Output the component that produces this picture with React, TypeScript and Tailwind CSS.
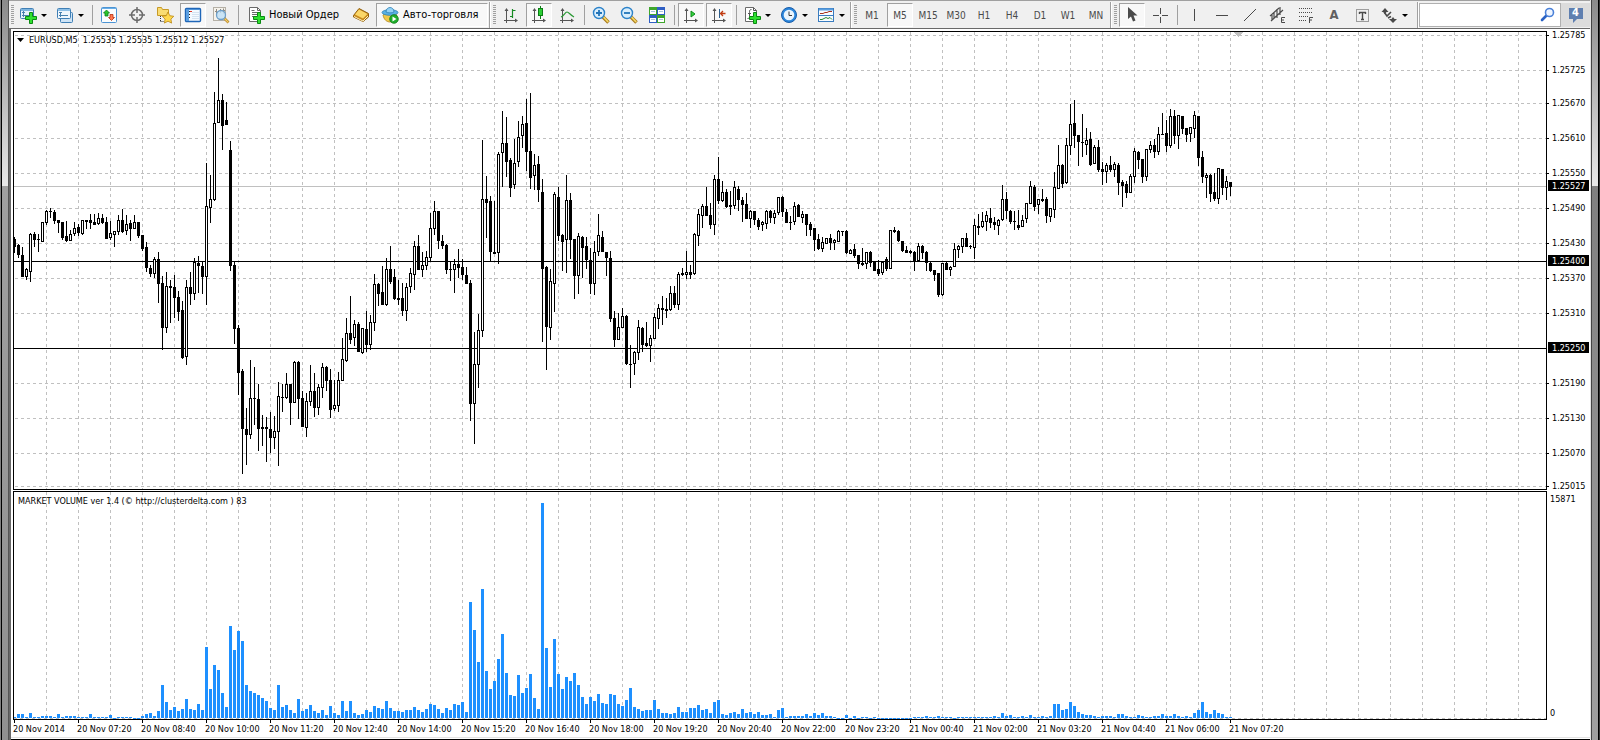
import type { ReactNode } from "react";
import clsx from "clsx";

const STEP = 4;
const CHART_TOP = 32;
const VOLUME_BASE = 226;

// high, body top, body bottom, low (screen y); a trailing "u" marks a hollow candle
const CANDLES = `
237 239 247 253,244 245 255 258,247 255 277 277,268 269 277 280 u,233 234 272 282 u,232 234 240 247,234 239 240 252,222 222 242 242 u,210 211 223 225 u,208 211 212 218,
210 212 221 224,220 220 223 233,222 222 238 240,221 236 241 242,230 234 241 241 u,222 228 234 236 u,224 227 233 236,220 220 234 235 u,220 220 222 229,214 220 223 229,
214 222 225 225,213 218 224 225 u,214 218 223 224,217 222 239 239,221 233 238 240 u,231 231 235 247 u,215 220 232 235 u,209 220 232 233,215 224 231 235 u,220 223 229 241,
215 222 229 229 u,222 222 236 238,235 235 249 251,242 247 268 272,265 268 274 277,257 259 274 278 u,252 259 284 303,276 283 328 350,272 286 328 333 u,280 286 288 323,
275 287 298 318,291 297 312 321,301 310 358 359,280 287 357 365 u,272 287 294 305,258 262 294 300 u,256 263 266 293,262 266 277 294,163 206 277 305 u,175 199 208 223 u,
92 123 200 201 u,58 100 123 123 u,94 100 126 150,102 120 125 125,141 150 266 271,262 265 329 344,325 328 373 395,369 371 429 474,408 429 435 465,360 398 435 439 u,
367 398 399 425,384 399 429 451,415 427 429 446,417 427 429 462,412 429 438 453,416 431 438 449 u,382 396 432 466 u,384 397 398 412,373 384 398 399 u,384 384 403 425,
361 362 403 403 u,361 362 399 419,391 398 427 427,393 401 428 437 u,365 391 402 406 u,373 391 408 417,384 387 408 415 u,363 367 388 398 u,366 367 381 391,369 380 410 418,
380 405 409 411 u,372 380 406 412 u,338 359 381 381 u,318 333 361 362 u,296 333 340 344,320 324 338 346 u,322 324 352 352,328 328 353 354 u,311 329 345 352,315 322 345 350 u,
274 284 323 331 u,283 284 294 306,266 292 305 305,258 269 305 306 u,246 269 282 284,269 277 299 300,280 298 300 305,283 298 311 316,283 287 311 321 u,268 273 287 293 u,
241 246 275 290 u,235 246 270 270,252 265 270 277 u,251 257 266 270 u,213 228 258 261 u,201 211 229 235 u,211 211 241 249,235 241 246 249,244 245 270 274,262 269 270 281,
259 264 270 293 u,249 264 268 278,259 267 275 280,267 275 284 284,280 283 404 421,332 364 404 444 u,314 330 365 388 u,140 199 331 337 u,176 199 203 238,196 201 252 261,
201 252 254 254,152 154 253 264 u,111 143 153 187 u,117 143 162 177,158 160 188 197,139 163 185 189 u,121 137 162 167 u,116 124 136 148 u,99 123 152 171,93 151 178 189,
154 165 176 190 u,156 164 190 202,179 192 269 342,266 267 327 370,269 281 328 340 u,192 194 284 312 u,187 197 236 241,234 235 242 271,175 200 240 273 u,193 200 240 259,
239 239 276 299,233 236 276 294 u,236 237 248 278,237 246 260 269,248 260 284 294,241 252 284 295 u,214 235 252 256 u,231 237 252 252,252 252 258 276,251 258 319 322,
311 318 340 347,313 327 340 340 u,308 316 328 328 u,315 316 364 365,345 364 365 388,351 352 364 375 u,320 327 353 360 u,327 328 345 352,322 343 346 347,335 338 346 362 u,
313 317 339 339 u,304 308 319 329 u,296 308 310 325,298 309 311 318,286 293 310 311 u,286 293 305 308,272 274 305 310 u,268 273 275 276,251 272 275 279 u,265 272 275 279,
233 234 274 275 u,209 214 236 246 u,204 206 216 228 u,187 206 216 216,203 215 225 229,175 179 225 235 u,157 179 201 204,181 192 201 202 u,189 192 207 208,191 205 207 215,
181 187 206 209 u,186 189 200 211,197 200 205 222,193 204 219 219,210 211 219 228 u,211 211 220 225,218 220 227 230,221 222 225 231 u,210 211 224 229 u,210 211 218 223,
210 213 218 224 u,197 197 213 215 u,196 197 212 217,209 212 223 223,216 222 223 230,202 206 222 225 u,204 205 217 217,211 214 218 223 u,214 214 225 236,222 224 230 236,
228 228 240 251,234 239 249 250,237 242 249 252 u,238 238 244 244 u,234 238 243 250,239 240 243 250 u,230 231 242 242 u,231 231 232 236,230 231 253 254,249 250 254 254 u,
244 249 256 258,255 255 264 269,248 263 265 266,252 252 264 269 u,251 252 263 267,261 261 271 271,260 269 274 276,262 262 273 275 u,257 259 269 271,230 230 269 269 u,
227 230 232 233,230 231 241 242,241 241 251 252,246 250 253 253,250 251 253 254,251 252 261 271,243 246 261 262 u,245 246 253 259,251 252 263 271,262 263 271 272,
270 270 275 281,273 273 295 297,263 263 295 296 u,262 263 270 270,266 267 270 276 u,243 249 267 267 u,245 246 250 258 u,238 238 247 253 u,233 238 247 247,245 246 247 249,
219 225 248 259 u,214 226 228 235,212 221 227 228 u,211 215 222 231 u,208 218 223 228,217 222 225 230,219 220 226 235 u,185 199 220 221 u,192 199 211 219,210 211 222 224,
211 221 222 230,210 225 228 230,215 220 227 227 u,203 203 219 223 u,181 186 204 204 u,185 187 207 211,199 199 205 214 u,189 199 201 202,197 199 216 223,208 208 217 222 u,
172 187 210 218 u,145 165 189 189 u,164 165 184 188,138 145 183 184 u,104 124 146 155 u,100 123 136 148,135 135 142 166,114 142 143 157,128 140 145 155 u,132 139 165 166,
145 147 164 164 u,140 147 170 172,162 169 172 185,163 165 172 183 u,156 165 170 172,162 164 170 177 u,163 165 183 195,180 182 186 207,181 184 193 198,174 176 193 193 u,
148 151 177 183 u,151 152 160 169,159 159 177 183,149 149 177 181 u,141 145 150 153 u,139 145 152 158,127 134 152 155 u,113 134 135 135,120 133 146 152,109 116 146 148 u,
110 116 136 144,115 115 136 149 u,116 116 129 134,128 128 135 142,127 127 134 142 u,111 115 129 138 u,116 116 158 166,151 157 177 183,173 175 178 198 u,174 175 194 202,
173 192 199 201,168 168 199 204 u,169 169 188 195,176 181 188 200 u,182 182 187 196`
  .trim()
  .split(",")
  .map((row) => {
    const [high, top, bottom, low, up] = row.trim().split(" ");
    return { high: +high, top: +top, bottom: +bottom, low: +low, hollow: up === "u" };
  });

const VOLUMES = [
  1, 4, 4, 1, 5, 1, 1, 2, 2, 2, 1, 4, 1, 2, 2, 2, 1, 1, 1, 4, 1, 1, 1, 1, 3, 0, 1, 1, 1, 1,
  0, 0, 2, 4, 5, 2, 7, 33, 16, 8, 11, 7, 9, 19, 9, 8, 14, 8, 71, 29, 53, 48, 25, 11, 92, 68, 87, 77, 33, 27,
  25, 23, 20, 17, 10, 8, 33, 11, 13, 8, 5, 19, 7, 9, 13, 7, 5, 8, 3, 12, 5, 3, 17, 7, 17, 5, 3, 4, 8, 6,
  12, 10, 9, 17, 10, 7, 7, 6, 8, 8, 11, 8, 6, 9, 14, 13, 9, 5, 10, 8, 14, 13, 16, 6, 116, 88, 56, 129, 47, 29,
  37, 59, 84, 45, 23, 22, 43, 25, 30, 44, 20, 9, 215, 70, 31, 79, 44, 29, 41, 37, 45, 33, 21, 14, 21, 17, 24, 15, 14, 24,
  23, 14, 12, 18, 30, 11, 9, 7, 8, 8, 18, 9, 5, 5, 4, 5, 11, 6, 6, 10, 10, 13, 8, 9, 5, 16, 18, 4, 3, 5,
  6, 4, 9, 5, 6, 4, 6, 3, 3, 4, 1, 8, 10, 1, 2, 2, 2, 2, 4, 2, 5, 3, 5, 2, 2, 1, 0, 0, 3, 0,
  2, 0, 1, 1, 0, 1, 0, 0, 0, 0, 0, 0, 0, 0, 0, 1, 1, 1, 2, 1, 1, 2, 1, 1, 1, 0, 1, 1, 1, 1,
  1, 1, 1, 1, 1, 2, 1, 5, 2, 3, 1, 1, 2, 1, 3, 1, 1, 2, 1, 2, 14, 14, 8, 9, 16, 12, 6, 4, 3, 3,
  2, 1, 2, 2, 2, 1, 4, 4, 2, 1, 1, 3, 2, 1, 1, 2, 2, 4, 2, 2, 4, 2, 1, 2, 1, 5, 8, 16, 6, 4,
  8, 5, 4, 1, 1,
];
// the bar at 06:40 is the last tall one, keep the tail aligned with the last candle
const VOLUME_BARS = VOLUMES.slice(0, CANDLES.length);

const PRICES: [string, number][] = [
  ["1.25785", 35], ["1.25725", 70], ["1.25670", 103], ["1.25610", 138], ["1.25550", 173],
  ["1.25490", 208], ["1.25430", 243], ["1.25370", 278], ["1.25310", 313], ["1.25190", 383],
  ["1.25130", 418], ["1.25070", 453], ["1.25015", 486],
];

const LEVELS: [string, number, string][] = [
  ["1.25527", 186, "#c0c0c0"],
  ["1.25400", 261, "#000"],
  ["1.25250", 348, "#000"],
];

const TIMES = [
  "20 Nov 2014", "20 Nov 07:20", "20 Nov 08:40", "20 Nov 10:00", "20 Nov 11:20", "20 Nov 12:40", "20 Nov 14:00",
  "20 Nov 15:20", "20 Nov 16:40", "20 Nov 18:00", "20 Nov 19:20", "20 Nov 20:40", "20 Nov 22:00", "20 Nov 23:20",
  "21 Nov 00:40", "21 Nov 02:00", "21 Nov 03:20", "21 Nov 04:40", "21 Nov 06:00", "21 Nov 07:20",
];

const TIMEFRAMES = ["M1", "M5", "M15", "M30", "H1", "H4", "D1", "W1", "MN"];

function Icon({ children, size = 18 }: { children: ReactNode; size?: number }) {
  return (
    <svg width={size} height={size} viewBox={`0 0 ${size} ${size}`} fill="none" className="shrink-0" aria-hidden="true">
      {children}
    </svg>
  );
}

function Plus() {
  return (
    <path transform="translate(6 6)" d="M4.500.5h3v4h4v3h-4v4h-3v-4h-4v-3h4z" fill="#2fe02f" stroke="#0a8a12" />
  );
}

function Axes() {
  return (
    <>
      <path d="M4.500 3v14M2 14.500h13" stroke="#555" />
      <path d="M4.500 2l2 3h-4zM16 14.500l-3-2v4z" fill="#555" />
    </>
  );
}

const icons = {
  newChart: (
    <Icon>
      <rect x="1.500" y="2.500" width="13" height="10" rx="1" fill="#e6f2fc" stroke="#3f7fb5" />
      <path d="M2 4h12" stroke="#7db4de" strokeWidth="2" />
      <path d="M4.500 5v6M3 9.500h8M3 6.500h3" stroke="#4680ae" />
      <Plus />
    </Icon>
  ),
  profiles: (
    <Icon>
      <rect x="4.500" y="6.500" width="12" height="10" rx="1" fill="#cfe4f6" stroke="#3f7fb5" />
      <rect x="1.500" y="2.500" width="13" height="10" rx="1" fill="#eef6fd" stroke="#3f7fb5" />
      <path d="M2 4h12" stroke="#8dbfe6" strokeWidth="2" />
      <path d="M4.500 6v5M3 9.500h9M3 6.500h3" stroke="#4680ae" />
    </Icon>
  ),
  marketWatch: (
    <Icon>
      <rect x="1.500" y="1.500" width="15" height="15" rx="1" fill="#fafdff" stroke="#4c94d4" />
      <path d="M2 2.500h14" stroke="#69aee6" />
      <path d="M6.500 4l3 3H8v3H5V7H3.500z" fill="#29c52c" stroke="#0c7d16" strokeWidth=".8" />
      <path d="M11.500 14.500l-3-3H10v-3h3v3h1.500z" fill="#ff7b52" stroke="#b52d10" strokeWidth=".8" />
    </Icon>
  ),
  target: (
    <Icon>
      <circle cx="9" cy="9" r="5.500" stroke="#6b6b6b" strokeWidth="1.500" />
      <path d="M9 1v6M9 11v6M1 9h6M11 9h6" stroke="#6b6b6b" strokeWidth="1.500" />
    </Icon>
  ),
  favorites: (
    <Icon>
      <path d="M1.500 1.500h4l1 2h6v6h-11z" fill="#f9dc72" stroke="#c79a28" />
      <path d="M4.500 10v6M4.500 15.500h3" stroke="#333" strokeDasharray="1 1" />
      <path d="M12 6l1.800 3.700 4 .6-2.900 2.800.7 4-3.600-1.900-3.600 1.900.7-4L6.200 10.300l4-.6z" fill="#ffd84c" stroke="#b98613" strokeWidth=".8" />
    </Icon>
  ),
  navigator: (
    <Icon>
      <rect x="1.500" y="2.500" width="15" height="13" rx="1" fill="#f4faff" stroke="#1f66b8" strokeWidth="1.400" />
      <path d="M2 3.500h14" stroke="#4f93d8" />
      <path d="M2 4h3v11H2z" fill="#5b9fe0" />
      <path d="M5.500 5v9" stroke="#222" strokeDasharray="1 2" />
      <path d="M8 6.500h7M8 8.500h7M8 10.500h7M8 12.500h7" stroke="#d5e3f0" />
      <path d="M6 5.500h2" stroke="#e03a2a" />
    </Icon>
  ),
  tester: (
    <Icon>
      <rect x="1.500" y="1.500" width="12" height="13" fill="#f6f3ec" stroke="#b5b0a6" />
      <path d="M4.500 3v6M3 5.500h2M8.500 3v4M11.500 2.500v5M10 4.500h3" stroke="#8f8a80" />
      <path d="M12 12l4.500 4.500" stroke="#b8862a" strokeWidth="2.600" />
      <path d="M12 12l4.300 4.300" stroke="#f2cf6a" strokeWidth="1.200" />
      <circle cx="9" cy="9" r="4.500" fill="#bfe0f8cc" stroke="#6d9fc9" strokeWidth="1.300" />
    </Icon>
  ),
  newOrder: (
    <Icon>
      <path d="M2.500 1.500h8l3 3v11h-11z" fill="#fff" stroke="#6a6a6a" />
      <path d="M10.500 1.500v3h3M5 6.500h6M5 8.500h6M5 10.500h3M4.500 4.500h3" stroke="#6a6a6a" />
      <Plus />
    </Icon>
  ),
  book: (
    <Icon>
      <path d="M1.500 9.500L7 2.500l9.500 5v3.500L11 15.500 1.500 11z" fill="#c88a1c" stroke="#93610c" />
      <path d="M3 8.500L7 3.500l8.500 4.500-4.500 4.500z" fill="#fbd768" />
      <path d="M2 10.500l9 4.500 5-5" stroke="#fff0c0" />
    </Icon>
  ),
  auto: (
    <Icon>
      <path d="M2 9c1-2 13-2 14 0-1 5-4 7-7 7s-6-2-7-7z" fill="#f0c84a" stroke="#b1861c" strokeWidth=".8" />
      <ellipse cx="9" cy="6.500" rx="8" ry="2.800" fill="#58b0e4" stroke="#2c7fb4" strokeWidth=".8" />
      <path d="M5 6c0-6 8-6 8 0-2 1.200-6 1.200-8 0z" fill="#93d2f5" stroke="#2c7fb4" strokeWidth=".8" />
      <circle cx="13" cy="13" r="4.300" fill="#1fae2c" stroke="#0c7d16" strokeWidth=".8" />
      <path d="M11.500 10.500l4 2.500-4 2.500z" fill="#fff" />
    </Icon>
  ),
  bars: (
    <Icon>
      <Axes />
      <path d="M10.500 3v9M8 10.500h2M11 4.500h2.500" stroke="#168a22" strokeWidth="1.200" />
    </Icon>
  ),
  candles: (
    <Icon>
      <Axes />
      <path d="M10.500 0v13" stroke="#0c7d16" />
      <rect x="8.500" y="2.500" width="4" height="7" fill="#2ccf35" stroke="#0c7d16" />
    </Icon>
  ),
  line: (
    <Icon>
      <Axes />
      <path d="M3 11c3-1 4-5 6-5s3 3 7 5" stroke="#2b9a35" strokeWidth="1.200" />
    </Icon>
  ),
  zoomIn: (
    <Icon>
      <path d="M10.500 10.500l6 6" stroke="#a87a1c" strokeWidth="3.600" />
      <path d="M11 10.500l5.200 5.500" stroke="#f5d765" strokeWidth="1.800" />
      <circle cx="7" cy="7" r="5.500" fill="#d9eefc" stroke="#2b82c9" strokeWidth="1.400" />
      <path d="M7 4v6M4 7h6" stroke="#2274b8" strokeWidth="1.800" />
    </Icon>
  ),
  zoomOut: (
    <Icon>
      <path d="M10.500 10.500l6 6" stroke="#a87a1c" strokeWidth="3.600" />
      <path d="M11 10.500l5.200 5.500" stroke="#f5d765" strokeWidth="1.800" />
      <circle cx="7" cy="7" r="5.500" fill="#d9eefc" stroke="#2b82c9" strokeWidth="1.400" />
      <path d="M4 7h6" stroke="#2274b8" strokeWidth="1.800" />
    </Icon>
  ),
  tile: (
    <Icon>
      <path d="M1 1h8v8H1z" fill="#3fa62c" />
      <path d="M9 1h8v8H9z" fill="#2f5fc4" />
      <path d="M1 9h8v8H1z" fill="#2f5fc4" />
      <path d="M9 9h8v8H9z" fill="#3fa62c" />
      <path d="M2 4h6v4H2zM10 4h6v4h-6zM2 12h6v4H2zM10 12h6v4h-6z" fill="#fff" />
      <path d="M3 5.500h4M11 5.500h4M3 13.500h4M11 13.500h4" stroke="#a9c4dd" />
    </Icon>
  ),
  autoScroll: (
    <Icon>
      <Axes />
      <path d="M9 5l4 3-4 3z" fill="#35d23f" stroke="#0c8a18" />
    </Icon>
  ),
  shift: (
    <Icon>
      <Axes />
      <path d="M9.500 3v9" stroke="#2a5f8e" />
      <path d="M15.500 7.500h-5M13 5l-2.500 2.500L13 10" stroke="#c03a10" strokeWidth="1.300" />
    </Icon>
  ),
  indicators: (
    <Icon>
      <path d="M2.500 1.500h8l3 3v11h-11z" fill="#fff" stroke="#6a6a6a" />
      <path d="M10.500 1.500v3h3M8.500 3.500c-2 0-2 1-2 3v4c0 2-1 2-2 2M5 7.500h3" stroke="#555" />
      <Plus />
    </Icon>
  ),
  clock: (
    <Icon>
      <circle cx="9" cy="9" r="7.500" fill="#2b86dc" stroke="#1a5eaa" />
      <circle cx="9" cy="9" r="5.300" fill="#eaf5fe" />
      <path d="M9 5.500V9.500h3" stroke="#3a3a3a" />
    </Icon>
  ),
  template: (
    <Icon>
      <rect x="1.500" y="2.500" width="15" height="13" fill="#f8fcff" stroke="#3a7cbf" />
      <path d="M2 3.500h14" stroke="#5a9fe0" strokeWidth="2" />
      <path d="M2 9.500h14" stroke="#3a7cbf" />
      <path d="M3 7.500h3l2-1h2l2-1h3" stroke="#a63320" />
      <path d="M3 13.500h2l2-1 2-1 2 1 2-1 2 2" stroke="#2b8a35" />
    </Icon>
  ),
  cursor: (
    <Icon>
      <path d="M5 1v12l3-2.500 2 5 2.500-1-2-5h4z" fill="#4a4a4a" />
    </Icon>
  ),
  crosshair: (
    <Icon>
      <path d="M9.500 2v6M9.500 11v6M2 9.500h6M11 9.500h6" stroke="#4a4a4a" />
    </Icon>
  ),
  vline: (
    <Icon>
      <path d="M9.500 3v12" stroke="#4a4a4a" />
    </Icon>
  ),
  hline: (
    <Icon>
      <path d="M3 9.500h12" stroke="#4a4a4a" />
    </Icon>
  ),
  trend: (
    <Icon>
      <path d="M3 15L15 3" stroke="#4a4a4a" />
    </Icon>
  ),
  channel: (
    <Icon>
      <path d="M1 10l9-8M2 15L14 4M5 6v6M8 3v9M11 1v8M3 9v5" stroke="#4a4a4a" strokeWidth="1.200" />
      <path d="M16 11.500h-3.500v5H16M12.500 14H15" stroke="#4a4a4a" />
    </Icon>
  ),
  fibo: (
    <Icon>
      <path d="M2 2.500h14M2 6.500h14M2 10.500h9M2 14.500h8" stroke="#4a4a4a" strokeDasharray="1 1" />
      <path d="M16 11.500h-3.500V17M12.500 14H15" stroke="#4a4a4a" />
    </Icon>
  ),
  label: (
    <Icon>
      <rect x="3.500" y="3.500" width="12" height="12" stroke="#4a4a4a" strokeDasharray="1 1" />
      <path d="M6 6.500h7M9.500 6v8M8 13.500h3M6.500 6v2M12.500 6v2" stroke="#4a4a4a" strokeWidth="1.400" />
    </Icon>
  ),
  arrows: (
    <Icon>
      <path d="M5 2l3.500 4H6.500L5 8 3.500 6H1.500zM13 17l-4-4h2.500L13 11l1.500 2H17z" fill="#4a4a4a" />
      <path d="M4 6l3 4 4-4M8 12l3-1.500" stroke="#4a4a4a" strokeWidth="1.600" />
    </Icon>
  ),
};

function Tool({ label, pressed, children }: { label: string; pressed?: boolean; children: ReactNode }) {
  return (
    <button
      type="button"
      aria-label={label}
      aria-pressed={pressed}
      className={clsx(
        "mx-px flex h-6 w-[26px] shrink-0 items-center justify-center text-[10px] text-[#4a4a4a]",
        pressed && "border border-t-[#a0a0a0] border-r-white border-b-white border-l-[#a0a0a0] bg-[#f8f8f8]"
      )}
    >
      {children}
    </button>
  );
}

function DropTool({ label, children }: { label: string; children: ReactNode }) {
  return (
    <button type="button" aria-label={label} className="flex h-6 w-[37px] shrink-0 items-center gap-1 pl-1">
      {children}
      <svg width="6" height="3" viewBox="0 0 6 3" aria-hidden="true">
        <path d="M0 0h6L3 3z" fill="#000" />
      </svg>
    </button>
  );
}

function Grip() {
  return (
    <div className="flex w-[6px] shrink-0 justify-center">
      <div className="h-5 w-[3px] bg-[repeating-linear-gradient(#a0a0a0_0_1px,#f0f0f0_1px_2px)]" />
    </div>
  );
}

function Separator() {
  return (
    <div className="flex w-[6px] shrink-0 justify-center">
      <div className="h-5 w-px bg-[#a0a0a0]" />
    </div>
  );
}

function BarEnd() {
  return <div className="h-[26px] w-[2px] shrink-0 border-l border-[#a0a0a0] bg-white" />;
}

function Toolbar() {
  return (
    <div
      role="toolbar"
      aria-label="Charts"
      className="flex h-[28px] items-center border-t border-[#a0a0a0] bg-[#f0f0f0] pt-px"
    >
      <Grip />
      <DropTool label="New chart">{icons.newChart}</DropTool>
      <DropTool label="Profiles">{icons.profiles}</DropTool>
      <Separator />
      <Tool label="Market watch">{icons.marketWatch}</Tool>
      <Tool label="Data window">{icons.target}</Tool>
      <Tool label="Favorites">{icons.favorites}</Tool>
      <Tool label="Navigator" pressed>{icons.navigator}</Tool>
      <Tool label="Strategy tester">{icons.tester}</Tool>
      <Separator />
      <button type="button" className="flex h-6 w-[106px] shrink-0 items-center gap-1 pl-[6px] text-[11px] whitespace-nowrap">
        {icons.newOrder}
        Новый Ордер
      </button>
      <Tool label="MetaEditor">{icons.book}</Tool>
      <button
        type="button"
        aria-pressed="true"
        className="mx-px flex h-6 w-[112px] shrink-0 items-center gap-1 border border-t-[#a0a0a0] border-r-white border-b-white border-l-[#a0a0a0] bg-[#f8f8f8] pl-1 text-[11px] whitespace-nowrap"
      >
        {icons.auto}
        Авто-торговля
      </button>
      <BarEnd />
      <Grip />
      <Tool label="Bar chart">{icons.bars}</Tool>
      <Tool label="Candlesticks" pressed>{icons.candles}</Tool>
      <Tool label="Line chart">{icons.line}</Tool>
      <Separator />
      <Tool label="Zoom in">{icons.zoomIn}</Tool>
      <Tool label="Zoom out">{icons.zoomOut}</Tool>
      <Tool label="Tile windows">{icons.tile}</Tool>
      <Separator />
      <Tool label="Auto scroll" pressed>{icons.autoScroll}</Tool>
      <Tool label="Chart shift" pressed>{icons.shift}</Tool>
      <Separator />
      <DropTool label="Indicators">{icons.indicators}</DropTool>
      <DropTool label="Periods">{icons.clock}</DropTool>
      <DropTool label="Templates">{icons.template}</DropTool>
      <BarEnd />
      <Grip />
      {TIMEFRAMES.map((tf) => (
        <Tool key={tf} label={tf} pressed={tf === "M5"}>
          {tf}
        </Tool>
      ))}
      <BarEnd />
      <Grip />
      <Tool label="Cursor" pressed>{icons.cursor}</Tool>
      <Tool label="Crosshair">{icons.crosshair}</Tool>
      <Separator />
      <Tool label="Vertical line">{icons.vline}</Tool>
      <Tool label="Horizontal line">{icons.hline}</Tool>
      <Tool label="Trendline">{icons.trend}</Tool>
      <Tool label="Equidistant channel">{icons.channel}</Tool>
      <Tool label="Fibonacci retracement">{icons.fibo}</Tool>
      <Tool label="Text">
        <span className="text-[13px] font-bold text-[#606060]">A</span>
      </Tool>
      <Tool label="Text label">{icons.label}</Tool>
      <DropTool label="Arrows">{icons.arrows}</DropTool>
      <div className="w-1 shrink-0" />
      <BarEnd />
      <div className="flex h-6 min-w-20 flex-1 items-center border border-[#b0b0b0] bg-white pr-1">
        <input type="text" aria-label="Search" className="h-full w-full min-w-0 bg-transparent px-1 text-[11px] outline-none" />
        <Icon size={16}>
          <path d="M6.500 8.500L2 13" stroke="#2a62c4" strokeWidth="2.600" strokeLinecap="round" />
          <circle cx="9.500" cy="5.500" r="4" fill="#eef5ff" stroke="#4a80d8" strokeWidth="1.600" />
        </Icon>
      </div>
      <button type="button" aria-label="Messages" className="relative flex h-6 w-[29px] shrink-0 items-center justify-center bg-[#dcdcdc]">
        <svg width="16" height="16" viewBox="0 0 16 16" aria-hidden="true">
          <path d="M1 1h14v11H9l-4 4v-4H1z" fill="#5f7fb0" />
        </svg>
        <span className="absolute top-1 text-[11px] leading-3 font-bold text-white">4</span>
      </button>
    </div>
  );
}

function VerticalGrid() {
  return (
    <>
      <defs>
        <pattern id="grid" width="32" height="6" patternUnits="userSpaceOnUse">
          <path d="M0 0h1v3h-1z" fill="#c0c0c0" />
        </pattern>
      </defs>
      <rect x="32" width="100%" height="100%" fill="url(#grid)" />
    </>
  );
}

function PriceChart() {
  return (
    <svg className="block h-[457px] w-full" shapeRendering="crispEdges" role="img" aria-label="EURUSD M5 candlestick chart">
      <VerticalGrid />
      {PRICES.map(([price, y]) => (
        <line key={price} x1="1" x2="100%" y1={y - CHART_TOP + 0.5} y2={y - CHART_TOP + 0.5} stroke="#c0c0c0" strokeDasharray="3 3" />
      ))}
      {LEVELS.map(([price, y, color]) => (
        <rect key={price} y={y - CHART_TOP} width="100%" height="1" fill={color} />
      ))}
      <path d="M1220 0h9l-4.500 5z" fill="#c0c0c0" />
      {CANDLES.map(({ high, top, bottom, low, hollow }, i) => (
        <g key={i} transform={`translate(${i * STEP} ${-CHART_TOP})`}>
          <rect y={high} width="1" height={low - high} />
          <rect x="-1" y={top} width="3" height={bottom - top} />
          {hollow && <rect y={top + 1} width="1" height={Math.max(bottom - top - 2, 0)} fill="#fff" />}
        </g>
      ))}
    </svg>
  );
}

function VolumeChart() {
  return (
    <svg className="block h-[227px] w-full" shapeRendering="crispEdges" role="img" aria-label="Market volume histogram">
      <VerticalGrid />
      <line x1="0" x2="100%" y1={VOLUME_BASE + 0.5} y2={VOLUME_BASE + 0.5} stroke="#c0c0c0" strokeDasharray="3 3" />
      {VOLUME_BARS.map((v, i) => (
        <rect key={i} x={i * STEP - 1} y={VOLUME_BASE - v} width="3" height={Math.max(v, 1)} fill="#1e90ff" />
      ))}
    </svg>
  );
}

function PriceAxis() {
  return (
    <svg className="block h-[459px] w-[43px] shrink-0 overflow-visible text-[9px]" shapeRendering="crispEdges">
      {PRICES.map(([price, y]) => (
        <g key={price}>
          <rect y={y - 31} width="2" height="1" />
          <text x="5" y={y - 28}>{price}</text>
        </g>
      ))}
      {LEVELS.map(([price, y]) => (
        <g key={price}>
          <rect x="1" y={y - 37} width="41" height="11" />
          <text x="5" y={y - 28} fill="#fff">{price}</text>
        </g>
      ))}
    </svg>
  );
}

export default function App() {
  return (
    <div className="flex min-h-screen bg-white font-['DejaVu_Sans_Condensed','DejaVu_Sans',sans-serif] text-[9px] text-black">
      <div className="flex w-[9px] shrink-0 border-r border-l border-r-[#555] border-l-[#808080] bg-black pl-px">
        <div className="flex-1 bg-[linear-gradient(#8a8a8a,#e8e8e8_186px,#a0a0a0_186px,#909090)]" />
      </div>

      <div className="flex min-w-0 flex-1 flex-col">
        <Toolbar />
        <main className="flex flex-1 flex-col border-t border-l-2 border-[#696969] pt-px">
          <div className="flex flex-1 flex-col pt-px pl-[2px]">
            <div className="flex">
              <section className="relative min-w-0 flex-1 border border-black">
                <PriceChart />
                <h1 className="absolute top-0 left-0 flex items-center gap-[5px] pt-[2px] pl-[3px] leading-3 whitespace-pre">
                  <svg width="7" height="4" viewBox="0 0 7 4" aria-hidden="true">
                    <path d="M0 0h7L3.500 4z" />
                  </svg>
                  {"EURUSD,M5  1.25535 1.25535 1.25512 1.25527"}
                </h1>
              </section>
              <PriceAxis />
            </div>

            <div className="mt-px flex">
              <section className="relative min-w-0 flex-1 border border-black">
                <VolumeChart />
                <h2 className="absolute top-0 left-0 pt-[3px] pl-1 leading-3 whitespace-nowrap">
                  MARKET VOLUME ver 1.4 (© http://clusterdelta.com ) 83
                </h2>
              </section>
              <div className="flex w-[43px] shrink-0 flex-col justify-between pt-[2px] pb-px pl-[3px] leading-3">
                <span>15871</span>
                <span>0</span>
              </div>
            </div>

            <div className="flex overflow-hidden">
              {TIMES.map((time) => (
                <div key={time} className="w-16 shrink-0 whitespace-nowrap">
                  <div className="ml-px h-[3px] w-px bg-black" />
                  <div className="leading-3">{time}</div>
                </div>
              ))}
            </div>
          </div>
          <div className="h-[3px] border-t border-b border-t-[#e3e3e3] border-b-black" />
        </main>
      </div>

      <div className="flex w-[10px] shrink-0 border-r border-l border-l-[#e3e3e3] border-r-[#333] bg-black pr-px">
        <div className="flex-1 border-l border-[#444] bg-[linear-gradient(#8a8a8a,#e8e8e8_186px,#808080_186px,#a0a0a0)]" />
      </div>
    </div>
  );
}
